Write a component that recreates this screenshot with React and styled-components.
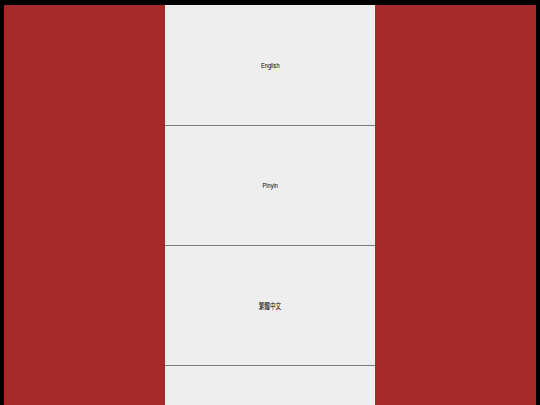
import React from "react";
import styled, { createGlobalStyle } from "styled-components";

const GlobalStyle = createGlobalStyle`
  html, body {
    margin: 0;
    padding: 0;
    background: #000;
    height: 100%;
    overflow: hidden;
  }
  body {
    font-family: "Liberation Sans", "Noto Sans CJK TC", sans-serif;
  }
`;

const Frame = styled.div`
  padding: 5px 4px 0 4px;
  height: 405px;
  box-sizing: border-box;
`;

const Stage = styled.div`
  background: #a52a2a;
  height: 100%;
  display: flex;
  justify-content: center;
  overflow: hidden;
`;

const Column = styled.div`
  width: 210px;
  background: #eeeeee;
  display: flex;
  flex-direction: column;
  padding-top: 1px;
`;

const Item = styled.div`
  flex: 0 0 120px;
  box-sizing: border-box;
  display: flex;
  align-items: center;
  justify-content: center;
  border-bottom: 1px solid #7a7a7a;
`;

const Label = styled.span`
  display: inline-block;
  font-size: 7.5px;
  color: #000;
  transform: scaleX(0.75);
  font-family: "Liberation Sans", "Noto Sans CJK TC", sans-serif;
`;

const languages = ["English", "Pinyin", "繁體中文", ""];

export default function App() {
  return (
    <>
      <GlobalStyle />
      <Frame>
        <Stage>
          <Column>
            {languages.map((lang, i) => (
              <Item key={i}>
                <Label>{lang}</Label>
              </Item>
            ))}
          </Column>
        </Stage>
      </Frame>
    </>
  );
}
